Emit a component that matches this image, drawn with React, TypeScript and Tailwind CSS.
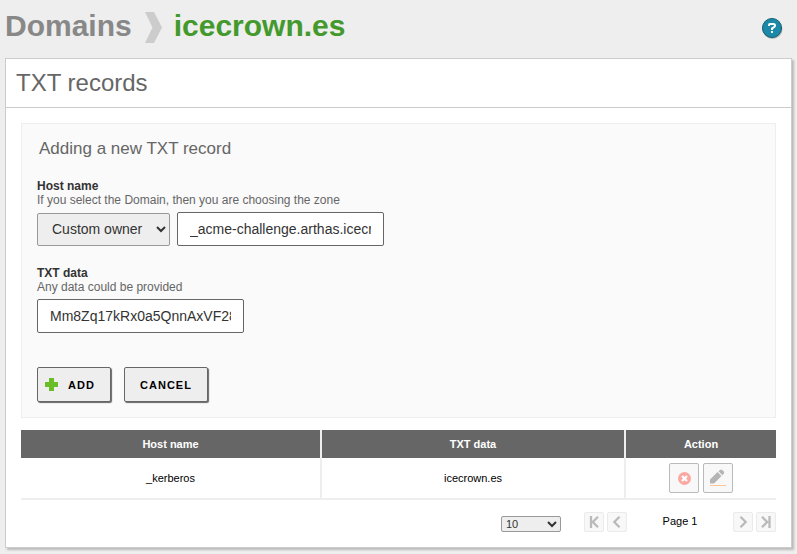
import type { ReactNode } from 'react';

function PagerButton({ path, label }: { path: string; label: string }) {
  return (
    <button
      aria-label={label}
      className="flex h-5 w-5 items-center justify-center rounded-[2px] border border-[#ebebeb] bg-[#f8f8f8]"
    >
      <svg width="16" height="16" viewBox="0 0 16 16" fill="none" stroke="#bababa" strokeWidth="2.300">
        <path d={path} />
      </svg>
    </button>
  );
}

function ActionButton({ label, children }: { label: string; children: ReactNode }) {
  return (
    <button
      aria-label={label}
      className="flex h-[30px] w-[30px] items-center justify-center rounded-[2px] border border-[#bababa] bg-[#f8f8f8]"
    >
      {children}
    </button>
  );
}

function FieldLabel({ title, hint }: { title: string; hint: string }) {
  return (
    <div className="text-[12px] leading-[14px]">
      <div className="font-bold text-[#333]">{title}</div>
      <div className="text-[#666]">{hint}</div>
    </div>
  );
}

const inputClass =
  'block h-[34px] w-[207px] rounded-[2px] border border-[#666] bg-white px-3 text-[14px] text-[#333] outline-none';
const buttonClass =
  'flex h-[35px] items-center rounded-[2px] border border-[#666] bg-[#eee] pt-px text-[11px] font-bold tracking-[1px] text-black shadow-[1px_1px_1px_#666]';

export default function App() {
  return (
    <div className="h-[554px] w-[797px] overflow-hidden bg-[#eee] font-['Liberation_Sans',Arial,sans-serif]">
      <header className="flex h-[58px] justify-between pl-[5px] pr-[14px]">
        <h1 className="flex h-[50px] items-center text-[30px] font-bold text-[#888]">
          <span>Domains</span>
          <svg className="mt-[4px] ml-[13px] mr-[12px]" width="17" height="31" viewBox="0 0 17 31">
            <path d="M0 0H9L17 15.500L9 31H0L7.500 15.500Z" fill="#ccc" />
          </svg>
          <span className="text-[#44992c]">icecrown.es</span>
        </h1>
        <svg className="mt-[17px]" width="22" height="23" viewBox="0 0 22 23">
          <circle cx="11.500" cy="12" r="10" fill="#b5b5b5" />
          <circle cx="11" cy="11" r="9.500" fill="#1d89a9" stroke="#145e73" />
          <path d="M8 9V8Q8 7 9 7H12.500Q14 7 14 8.500T12.500 10.500L11 11.500V13M11 14V16" fill="none" stroke="#fff" strokeWidth="2" />
        </svg>
      </header>

      <main className="ml-[5px] h-[490px] w-[787px] border border-[#ccc] bg-white shadow-[2px_2px_2px_#bbb]">
        <h2 className="h-[49px] border-b border-[#ccc] pl-[10px] text-[24px] leading-[48px] text-[#666]">TXT records</h2>

        <div className="px-[15px] pt-[15px]">
          <form className="h-[295px] border border-[#eee] bg-[#fafafa] px-[15px]" onSubmit={(e) => e.preventDefault()}>
            <h3 className="pl-[2px] pt-[15px] text-[17px] leading-[20px] text-[#666]">Adding a new TXT record</h3>
            <div className="mt-[20px]">
              <FieldLabel title="Host name" hint="If you select the Domain, then you are choosing the zone" />
              <div className="mt-[5px] flex items-end gap-[7px]">
                <select className="h-[33px] w-[133px] rounded-[2px] border border-[#999] bg-[#eee] pb-[2px] pl-[10px] text-[14px] text-[#333]">
                  <option>Custom owner</option>
                </select>
                <input className={inputClass} defaultValue="_acme-challenge.arthas.icecrown.es" />
              </div>
            </div>
            <div className="mt-5">
              <FieldLabel title="TXT data" hint="Any data could be provided" />
              <input className={`mt-[5px] ${inputClass}`} defaultValue="Mm8Zq17kRx0a5QnnAxVF28" />
            </div>
            <div className="mt-[34px] flex gap-[13px]">
              <button className={`${buttonClass} w-[74px] gap-[10px] pl-[7px]`}>
                <svg className="-mt-px" width="13" height="13" viewBox="0 0 13 13">
                  <path d="M4 0H9V4H13V9H9V13H4V9H0V4H4Z" fill="#69be28" />
                </svg>
                ADD
              </button>
              <button className={`${buttonClass} w-[84px] justify-center`}>CANCEL</button>
            </div>
          </form>

          <table className="mt-3 w-[755px] table-fixed border-collapse text-center text-[11px]">
            <colgroup>
              <col className="w-[300px]" />
              <col className="w-[304px]" />
              <col className="w-[151px]" />
            </colgroup>
            <thead className="bg-[#666] text-white">
              <tr className="h-7">
                <th className="border-r-2 border-[#eee] p-0">Host name</th>
                <th className="border-r-2 border-[#eee] p-0">TXT data</th>
                <th className="p-0">Action</th>
              </tr>
            </thead>
            <tbody className="text-black">
              <tr className="h-[41px] border-b-2 border-[#eee]">
                <td className="border-r-2 border-[#eee] p-0">_kerberos</td>
                <td className="border-r-2 border-[#eee] p-0">icecrown.es</td>
                <td className="p-0">
                  <div className="flex justify-center gap-1">
                    <ActionButton label="Delete">
                      <svg className="ml-px" width="13" height="13" viewBox="0 0 13 13">
                        <circle cx="6.500" cy="6.500" r="6.500" fill="#fba8a3" />
                        <path d="M4 4L9 9M9 4L4 9" stroke="#fff" strokeWidth="2.200" />
                      </svg>
                    </ActionButton>
                    <ActionButton label="Edit">
                      <svg width="18" height="18" viewBox="0 0 18 18">
                        <path d="M1 14.500V10.500L8.500 3L12.500 7L5 14.500Z M9.500 2.200L11 1Q12 .3 13 .8L15 2.800Q15.500 4 14.800 4.800L13.300 6.200Z" fill="#b5b5b5" />
                        <path d="M1 16.500H17" stroke="#ffc59b" />
                      </svg>
                    </ActionButton>
                  </div>
                </td>
              </tr>
            </tbody>
          </table>

          <div className="mt-3 flex h-[22px] items-start text-[11px] text-black">
            <select className="ml-[480px] mt-1 h-4 w-[60px] rounded-[2px] border border-[#999] bg-[#eee] text-[11px] text-[#333]">
              <option>10</option>
            </select>
            <div className="ml-[23px] flex gap-[3px]">
              <PagerButton label="First page" path="M5 2V14M12 2.800L6.800 8L12 13.200" />
              <PagerButton label="Previous page" path="M10.500 2.800L5.300 8L10.500 13.200" />
            </div>
            <span className="w-[106px] text-center leading-[18px]">Page 1</span>
            <div className="flex gap-[3px]">
              <PagerButton label="Next page" path="M5.500 2.800L10.700 8L5.500 13.200" />
              <PagerButton label="Last page" path="M4 2.800L9.200 8L4 13.200M11.500 2V14" />
            </div>
          </div>
        </div>
      </main>
    </div>
  );
}
